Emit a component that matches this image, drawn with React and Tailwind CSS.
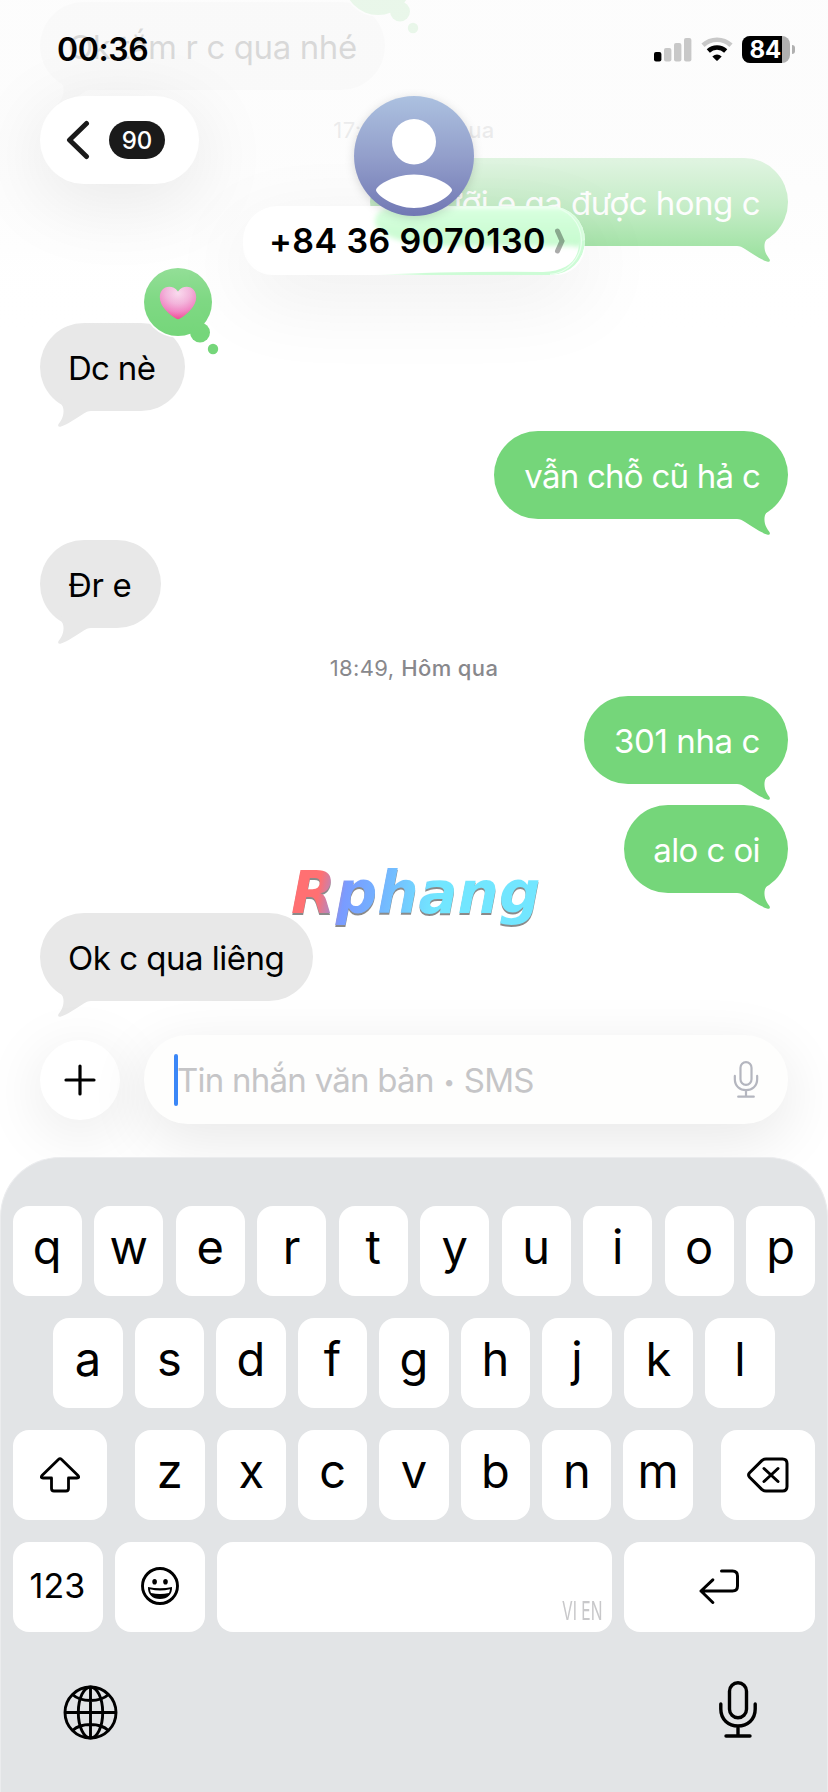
const INTER = "font-['Inter','Liberation_Sans',sans-serif]";

function Reaction({ children }) {
  return (
    <svg className="absolute -top-[57px] -right-[35px] overflow-visible" width="78" height="86" viewBox="0 0 78 86">
      <circle cx="36" cy="36" r="35.6" fill="#fff" />
      <circle cx="36" cy="36" r="34" fill="#75d67a" />
      <circle cx="58" cy="66.5" r="10" fill="#75d67a" />
      <circle cx="71" cy="83" r="5.2" fill="#75d67a" />
      {children}
    </svg>
  );
}

function Heart() {
  return (
    <>
      <defs>
        <radialGradient id="heart" cx="0.5" cy="0.2" r="0.82">
          <stop offset="0" stopColor="#f9d6ec" />
          <stop offset="0.4" stopColor="#f2aed8" />
          <stop offset="0.7" stopColor="#f07fc0" />
          <stop offset="1" stopColor="#f23f8c" />
        </radialGradient>
      </defs>
      <path
        d="M36 25.6C33.5 22 30.500 20.800 27.200 20.800C21.500 20.800 17.800 25.500 17.800 31.200C17.800 40 26.500 48 34.500 52.800Q36 53.700 37.500 52.800C45.500 48 54.200 40 54.200 31.200C54.200 25.500 50.500 20.800 44.800 20.800C41.500 20.800 38.500 22 36 25.600Z"
        fill="url(#heart)"
      />
    </>
  );
}

const TAIL =
  "M21.500 81.500C24.500 85 23.800 92 22 95.500C21 98 19 100 18.300 101.600C17.600 103.400 19 104.300 21 103.600C28 101 36 95.500 43 91C46 89 48 88 51 88L51 74L22 74Z";

function Bubble({ mine, className, textClass, children, reaction }) {
  return (
    <div
      className={`relative flex h-[88px] items-center rounded-[44px] pt-[2px] whitespace-nowrap text-[33px] leading-none ${
        mine ? "self-end justify-end pr-[28px] bg-[#75d67a] text-white" : "self-start pl-[28px] bg-[#e8e8e8] text-black"
      } ${className}`}
    >
      <svg
        className={`absolute top-0 ${mine ? "right-0 -scale-x-100" : "left-0"}`}
        width="60"
        height="106"
        viewBox="0 0 60 106"
      >
        <path d={TAIL} fill={mine ? "#75d67a" : "#e8e8e8"} />
      </svg>
      <span className={`relative ${textClass}`}>{children}</span>
      {reaction}
    </div>
  );
}

function Stamp({ time, className }) {
  return (
    <div className={`self-center text-[22px] leading-[26px] text-[#88888c] ${className}`}>
      {time}, <span className="font-medium">Hôm qua</span>
    </div>
  );
}

function Conversation() {
  return (
    <div className="flex h-[1017px] flex-col px-10 pt-[2px]">
      <Bubble className="w-[345px]" textClass="tracking-[-0.4px]" reaction={<Reaction />}>
        Ok tắm r c qua nhé
      </Bubble>
      <Stamp time="17:16" className="mt-[27px] tracking-[0.4px]" />
      <Bubble mine className="mt-[15px] w-[418px]" textClass="tracking-[-0.5px]">
        8 rưỡi e ga được hong c
      </Bubble>
      <Bubble
        className="mt-[77px] w-[145px]"
        textClass="tracking-[-0.7px]"
        reaction={
          <Reaction>
            <Heart />
          </Reaction>
        }
      >
        Dc nè
      </Bubble>
      <Bubble mine className="mt-[20px] w-[294px]" textClass="tracking-[-0.75px]">
        vẫn chỗ cũ hả c
      </Bubble>
      <Bubble className="mt-[21px] w-[121px]" textClass="tracking-[-0.3px]">
        Đr e
      </Bubble>
      <Stamp time="18:49" className="mt-[27px] tracking-[0.4px]" />
      <Bubble mine className="mt-[15px] w-[204px]" textClass="tracking-[-0.4px]">
        301 nha c
      </Bubble>
      <Bubble mine className="mt-[21px] w-[164px]" textClass="tracking-[-0.6px]">
        alo c oi
      </Bubble>
      <Bubble className="mt-[20px] w-[273px]" textClass="tracking-[-0.5px]">
        Ok c qua liêng
      </Bubble>
    </div>
  );
}

function StatusBar() {
  return (
    <div className="flex h-24 items-center justify-between pr-[33px] pl-[57px]">
      <div className="pt-[4px] text-[32px] leading-none font-semibold tracking-[-0.4px]">00:36</div>
      <div className="flex items-center gap-[9px] pt-[3px]">
        <svg width="38" height="24" viewBox="0 0 38 24">
          <rect x="0" y="14" width="7.400" height="9.500" rx="2" fill="#000" />
          <rect x="10" y="10" width="7.400" height="13.500" rx="2" fill="#c8c8c8" />
          <rect x="20" y="5" width="7.400" height="18.500" rx="2" fill="#c8c8c8" />
          <rect x="30" y="0" width="7.400" height="23.500" rx="2" fill="#c8c8c8" />
        </svg>
        <svg width="32" height="25" viewBox="0 0 32 25">
          <path d="M2 8.300A20.500 20.500 0 0 1 30 8.300" fill="none" stroke="#c8c8c8" strokeWidth="4.600" />
          <path d="M7.300 14A12.700 12.700 0 0 1 24.700 14" fill="none" stroke="#000" strokeWidth="4.600" />
          <path d="M11.300 19.400Q16 15.700 20.700 19.400L16.700 23.400Q16 24 15.300 23.400Z" fill="#000" />
        </svg>
        <div className="flex items-center gap-[2px]">
          <div className="flex h-[27px] w-[48px] items-center overflow-hidden rounded-[8px] bg-[#b0b0b0]">
            <div className="flex h-full w-[40px] items-center justify-end bg-black pr-px text-[24px] leading-none font-bold tracking-[-0.2px] text-white">
              84
            </div>
          </div>
          <div className="h-[9px] w-[3px] rounded-r-full bg-[#b0b0b0]" />
        </div>
      </div>
    </div>
  );
}

function Avatar() {
  return (
    <svg className="relative z-10 drop-shadow-[0_2px_5px_rgba(0,0,0,0.14)]" width="120" height="120" viewBox="0 0 120 120">
      <defs>
        <linearGradient id="avatar" x1="0" y1="0" x2="0" y2="1">
          <stop offset="0" stopColor="#acc1e0" />
          <stop offset="0.5" stopColor="#939fcb" />
          <stop offset="1" stopColor="#7178b4" />
        </linearGradient>
      </defs>
      <circle cx="60" cy="60" r="60" fill="url(#avatar)" />
      <ellipse cx="60" cy="45.700" rx="22" ry="22.800" fill="#fff" />
      <path
        d="M22 94C22 90.500 38 78.500 60 78.500S98 90.500 98 94C98 98.500 80 112 60 112S22 98.500 22 94Z"
        fill="#fff"
      />
    </svg>
  );
}

function ContactPill() {
  return (
    <div className="relative -mt-[10px] flex h-[69px] w-[342px] items-center overflow-hidden rounded-[35px] bg-white">
      <svg className="absolute inset-0" width="342" height="69" viewBox="0 0 342 69">
        <defs>
          <filter id="soft" x="-20%" y="-40%" width="140%" height="180%">
            <feGaussianBlur stdDeviation="2.500" />
          </filter>
          <linearGradient id="glass" x1="0" y1="0" x2="0" y2="1">
            <stop offset="0" stopColor="#d8ffdf" />
            <stop offset="1" stopColor="#c6fbce" />
          </linearGradient>
          <linearGradient id="rim" x1="0" y1="0" x2="1" y2="0">
            <stop offset="0" stopColor="#d2fbd9" stopOpacity="0" />
            <stop offset="0.25" stopColor="#cdfcd6" />
            <stop offset="1" stopColor="#cdfcd6" />
          </linearGradient>
        </defs>
        <path
          d="M150 2H320Q342 8 342 34Q338 44 330 40H190C165 38 132 30 132 16C132 6 140 2 150 2Z"
          fill="url(#glass)"
          filter="url(#soft)"
        />
        <path
          d="M130 69H307C328 69 342 54 342 34L336 36C336 54 325 65 300 66Q210 65 130 69Z"
          fill="url(#rim)"
        />
        <path d="M190 0.600H307A34 34 0 0 1 307 68.400" fill="none" stroke="#e9ffee" strokeWidth="1.200" />
      </svg>
      <div className="relative flex items-center pl-[26px]">
        <span className="w-[275px] text-[34px] leading-none font-semibold whitespace-nowrap tracking-[0.4px]">
          +84 36 9070130
        </span>
        <svg className="ml-[10px]" width="12" height="28" viewBox="0 0 12 28">
          <path d="M3.500 4L8 14L3.500 24" fill="none" stroke="#000" strokeOpacity="0.33" strokeWidth="5" strokeLinecap="round" />
        </svg>
      </div>
    </div>
  );
}

function Header() {
  return (
    <header className="absolute inset-x-0 top-0 h-[420px] bg-[linear-gradient(to_bottom,rgba(252,252,252,0.86)_0px,rgba(252,252,252,0.86)_130px,rgba(252,252,252,0.78)_162px,rgba(252,252,252,0.6)_206px,rgba(252,252,252,0.36)_246px,rgba(253,253,253,0.22)_268px,rgba(254,254,254,0.08)_300px,rgba(255,255,255,0)_335px)]">
      <StatusBar />
      <div className="grid grid-cols-[1fr_342px_1fr] items-start">
        <div className="ml-10 flex h-[88px] w-[159px] items-center rounded-[44px] bg-white pl-[26px] shadow-[0_16px_76px_6px_rgba(0,0,0,0.08)]">
          <svg width="24" height="40" viewBox="0 0 24 40">
            <path d="M20.500 3.500L3.500 20L20.500 36.500" fill="none" stroke="#1a1a1a" strokeWidth="5" strokeLinecap="round" strokeLinejoin="round" />
          </svg>
          <div className="ml-[19px] flex h-[38px] w-[56px] items-center justify-center rounded-[19px] bg-[#1a1a1a] pt-px text-[24px] leading-none font-medium text-white">
            90
          </div>
        </div>
        <div className="flex flex-col items-center">
          <Avatar />
          <div className="rounded-[35px] shadow-[0_18px_84px_6px_rgba(0,0,0,0.07)]">
            <ContactPill />
          </div>
        </div>
      </div>
    </header>
  );
}

function Mic({ className, color, width, height }) {
  return (
    <svg className={className} width={width} height={height} viewBox="0 0 38 57" fill="none" stroke={color} strokeWidth="3.400" strokeLinecap="round">
      <rect x="10.500" y="1.800" width="17" height="35" rx="8.500" />
      <path d="M1.800 23V28C1.800 38.500 9.500 45 19 45S36.200 38.500 36.200 28V23M19 45V55M7 55H31" />
    </svg>
  );
}

function Composer() {
  return (
    <div className="relative flex h-[140px] items-start gap-6 px-10 pt-[18px]">
      <div className="mt-[5px] flex size-20 items-center justify-center rounded-full bg-white shadow-[0_12px_60px_4px_rgba(0,0,0,0.08)]">
        <svg width="32" height="32" viewBox="0 0 32 32">
          <path d="M16 2V30M2 16H30" stroke="#000" strokeWidth="3.200" strokeLinecap="round" />
        </svg>
      </div>
      <div className="relative flex h-[89px] w-[644px] items-center rounded-[44px] bg-[#fefefd] pr-[29px] pl-[30px] shadow-[0_16px_60px_2px_rgba(0,0,0,0.09)]">
        <div className="h-[52px] w-1 rounded-full bg-[#3b87f7]" />
        <span className="-ml-px pt-px text-[33px] leading-none tracking-[-0.75px] whitespace-nowrap text-[#c5c5c7]">
          Tin nhắn văn bản <span className="inline-block w-[13px] text-center align-[3px] text-[20px] leading-none">•</span> SMS
        </span>
        <Mic className="ml-auto" color="#b4b6bf" width="26" height="37" />
      </div>
    </div>
  );
}

const KEY = "flex h-[90px] items-center justify-center rounded-[16px] bg-white leading-none";

function Letters({ keys }) {
  return keys.split("").map((k) => (
    <div key={k} className={`${KEY} w-[69.4px] pb-[9px] text-[47px]`}>
      {k}
    </div>
  ));
}

function Keyboard() {
  return (
    <div className="relative flex h-[635px] flex-col gap-[22px] rounded-t-[60px] border-x-[1.5px] border-t border-[#ebecee] bg-[#e2e4e6] px-[11.5px] pt-[48px]">
      <div className="flex justify-between">
        <Letters keys="qwertyuiop" />
      </div>
      <div className="flex justify-between px-[40.700px]">
        <Letters keys="asdfghjkl" />
      </div>
      <div className="flex justify-between">
        <div className={`${KEY} w-[94px]`}>
          <svg width="40" height="36" viewBox="0 0 40 36">
            <path
              d="M18.400 2.400Q20 0.900 21.600 2.400L38 18.600Q39.800 21 37 21H28.500V31.500Q28.500 34 26 34H14Q11.500 34 11.500 31.500V21H3Q0.200 21 2 18.600Z"
              fill="none"
              stroke="#000"
              strokeWidth="2.800"
              strokeLinejoin="round"
            />
          </svg>
        </div>
        <div className="flex gap-3">
          <Letters keys="zxcvbnm" />
        </div>
        <div className={`${KEY} w-[94px]`}>
          <svg width="42" height="36" viewBox="0 0 42 36" fill="none" stroke="#000" strokeWidth="3" strokeLinecap="round" strokeLinejoin="round">
            <path d="M19 2H35.500Q40 2 40 6.500V29.500Q40 34 35.500 34H19Q16.500 34 14.800 32.400L2.600 20.200Q0.600 18 2.600 15.800L14.800 3.600Q16.500 2 19 2Z" />
            <path d="M17 11.500L31 24.500M31 11.500L17 24.500" />
          </svg>
        </div>
      </div>
      <div className="flex gap-3">
        <div className={`${KEY} w-[90px] pb-[3px] text-[34px]`}>
          <span className="tracking-[0.2px]">123</span>
        </div>
        <div className={`${KEY} w-[90px] pb-[2px]`}>
          <svg width="38" height="38" viewBox="0 0 38 38">
            <circle cx="19" cy="19" r="17.500" fill="none" stroke="#000" strokeWidth="2.900" />
            <ellipse cx="13.600" cy="14.700" rx="2.300" ry="2.800" />
            <ellipse cx="24.500" cy="14.700" rx="2.300" ry="2.800" />
            <path d="M7 19.900Q19 22.800 31 19.900C31.400 27 26.500 32 19 32S6.600 27 7 19.900Z" />
            <path d="M9 22.200Q19 24.600 29 22.200Q28.800 24.500 28 26Q19 28.200 10 26Q9.200 24.500 9 22.200Z" fill="#fff" />
          </svg>
        </div>
        <div className={`${KEY} w-[395px] !items-end !justify-end pr-[9px] pb-[8px] text-[26px] text-[#c8c8ca]`}>
          <span className="origin-right scale-x-[0.6] whitespace-nowrap">VI EN</span>
        </div>
        <div className={`${KEY} w-[191px]`}>
          <svg className="mb-[3px]" width="40" height="36" viewBox="0 0 40 36" fill="none" stroke="#000" strokeWidth="3" strokeLinecap="round" strokeLinejoin="round">
            <path d="M22.500 3H33.500Q38.500 3 38.500 8V18Q38.500 23 33.500 23H2M13.800 11.800L2 23L13.800 34.500" />
          </svg>
        </div>
      </div>
      <div className="flex items-start justify-between pt-[27px] pr-[58.500px] pl-[50.500px]">
        <svg className="mt-[3.500px]" width="55" height="55" viewBox="0 0 55 55" fill="none" stroke="#000" strokeWidth="2.900">
          <circle cx="27.500" cy="27.500" r="25.500" />
          <ellipse cx="27.500" cy="27.500" rx="12.200" ry="25.500" />
          <path d="M27.500 2V53M2 27.500H53M9.500 9.500Q16 15.500 27.500 15.500T45.500 9.500M9.500 45.500Q16 39.500 27.500 39.500T45.500 45.500" />
        </svg>
        <Mic color="#000" width="38" height="57" />
      </div>
    </div>
  );
}

function Watermark() {
  return (
    <div className="absolute top-[851px] left-[291px] bg-[linear-gradient(100deg,#ff7072_0px,#ff7072_34px,#7a9bff_60px,#74b0ff_90px,#72e6ff_150px,#72e6ff_260px)] bg-clip-text pr-2 font-['DejaVu_Sans',sans-serif] text-[58px] leading-[84px] font-bold text-transparent italic drop-shadow-[0_2px_0.5px_rgba(60,60,60,0.6)]">
      Rphang
    </div>
  );
}

export default function App() {
  return (
    <div className={`relative flex h-[1792px] w-[828px] flex-col overflow-hidden bg-white text-black ${INTER}`}>
      <Conversation />
      <Composer />
      <Keyboard />
      <Header />
      <Watermark />
    </div>
  );
}
